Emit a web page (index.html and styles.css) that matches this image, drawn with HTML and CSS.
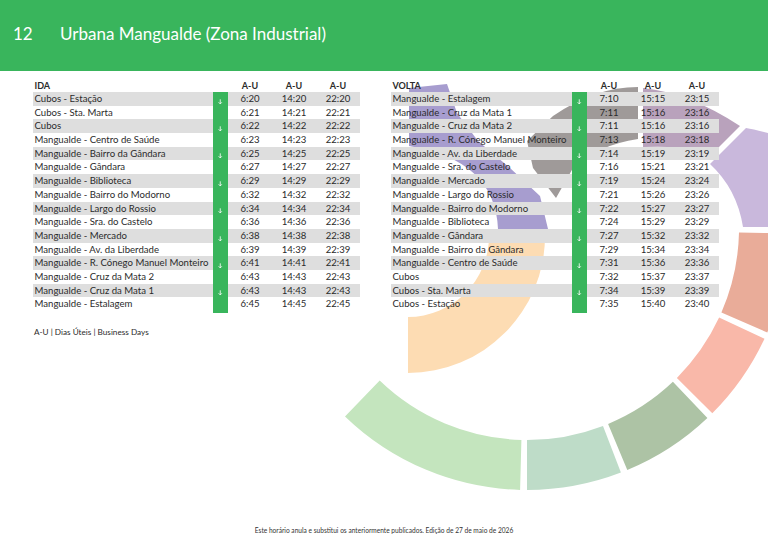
FILE: index.html
```html
<!DOCTYPE html>
<html lang="pt">
<head>
<meta charset="utf-8">
<title>12 Urbana Mangualde (Zona Industrial)</title>
<link rel="stylesheet" href="styles.css">
</head>
<body>
<svg class="ring" width="768" height="543" viewBox="0 0 768 543" aria-hidden="true">
  <path class="s-blue" d="M409,88 L447,84 L457,113 L478,141 L510,168 L540,196 L548,229 L498,229 Q495,160 409,146 Z"/>
  <path class="s-peach" d="M545,236 A137,137 0 0 1 408,373 L408,317 A81,81 0 0 0 489,236 Z"/>
  <path class="s-gray" d="M638,87 Q595,87 553,116 L527,141 L533,168 L556,198 L573,168 Q598,145 638,139 Z"/>
  <path class="s-mauve" d="M643,88 Q690,93 740,126 L716,150 Q680,146 643,147 Z"/>
  <path class="s-lilac" d="M710,164 L746,128 Q760,130 790,140 L790,227 L743,227 Q737,189 710,164 Z"/>
  <path class="s-coral" d="M788.9,233.5 A262,262 0 0 1 767.3,332.5 L721.4,312.5 A212,212 0 0 0 739.0,232.4 Z"/>
  <path class="s-salmon" d="M764.5,338.7 A262,262 0 0 1 712.3,413.3 L676.9,377.9 A212,212 0 0 0 719.1,317.6 Z"/>
  <path class="s-sage" d="M707.4,418.1 A262,262 0 0 1 627.3,470.1 L608.1,423.9 A212,212 0 0 0 672.9,381.8 Z"/>
  <path class="s-mint" d="M620.9,472.6 A262,262 0 0 1 527,490 L527,440 A212,212 0 0 0 603.0,425.9 Z"/>
  <path class="s-green" d="M520.1,489.9 A262,262 0 0 1 345.0,416.5 L379.7,380.5 A212,212 0 0 0 521.4,439.9 Z"/>
</svg>

<header class="top">
  <span class="num">12</span>
  <span class="title">Urbana Mangualde (Zona Industrial)</span>
</header>

<main class="content">
  <div class="tables">
    <section class="tt ida">
      <div class="row head"><span class="name">IDA</span><span class="bar"></span><span class="t">A-U</span><span class="t">A-U</span><span class="t">A-U</span></div>
      <div class="row alt"><span class="name">Cubos - Estação</span><span class="bar"><svg class="arr" viewBox="0 0 5 6"><path d="M2.5 0.3V5.4M0.7 3.6L2.5 5.4L4.3 3.6"/></svg></span><span class="t">6:20</span><span class="t">14:20</span><span class="t">22:20</span></div>
      <div class="row"><span class="name">Cubos - Sta. Marta</span><span class="bar"></span><span class="t">6:21</span><span class="t">14:21</span><span class="t">22:21</span></div>
      <div class="row alt"><span class="name">Cubos</span><span class="bar"><svg class="arr" viewBox="0 0 5 6"><path d="M2.5 0.3V5.4M0.7 3.6L2.5 5.4L4.3 3.6"/></svg></span><span class="t">6:22</span><span class="t">14:22</span><span class="t">22:22</span></div>
      <div class="row"><span class="name">Mangualde - Centro de Saúde</span><span class="bar"></span><span class="t">6:23</span><span class="t">14:23</span><span class="t">22:23</span></div>
      <div class="row alt"><span class="name">Mangualde - Bairro da Gândara</span><span class="bar"><svg class="arr" viewBox="0 0 5 6"><path d="M2.5 0.3V5.4M0.7 3.6L2.5 5.4L4.3 3.6"/></svg></span><span class="t">6:25</span><span class="t">14:25</span><span class="t">22:25</span></div>
      <div class="row"><span class="name">Mangualde - Gândara</span><span class="bar"></span><span class="t">6:27</span><span class="t">14:27</span><span class="t">22:27</span></div>
      <div class="row alt"><span class="name">Mangualde - Biblioteca</span><span class="bar"><svg class="arr" viewBox="0 0 5 6"><path d="M2.5 0.3V5.4M0.7 3.6L2.5 5.4L4.3 3.6"/></svg></span><span class="t">6:29</span><span class="t">14:29</span><span class="t">22:29</span></div>
      <div class="row"><span class="name">Mangualde - Bairro do Modorno</span><span class="bar"></span><span class="t">6:32</span><span class="t">14:32</span><span class="t">22:32</span></div>
      <div class="row alt"><span class="name">Mangualde - Largo do Rossio</span><span class="bar"><svg class="arr" viewBox="0 0 5 6"><path d="M2.5 0.3V5.4M0.7 3.6L2.5 5.4L4.3 3.6"/></svg></span><span class="t">6:34</span><span class="t">14:34</span><span class="t">22:34</span></div>
      <div class="row"><span class="name">Mangualde - Sra. do Castelo</span><span class="bar"></span><span class="t">6:36</span><span class="t">14:36</span><span class="t">22:36</span></div>
      <div class="row alt"><span class="name">Mangualde - Mercado</span><span class="bar"><svg class="arr" viewBox="0 0 5 6"><path d="M2.5 0.3V5.4M0.7 3.6L2.5 5.4L4.3 3.6"/></svg></span><span class="t">6:38</span><span class="t">14:38</span><span class="t">22:38</span></div>
      <div class="row"><span class="name">Mangualde - Av. da Liberdade</span><span class="bar"></span><span class="t">6:39</span><span class="t">14:39</span><span class="t">22:39</span></div>
      <div class="row alt"><span class="name">Mangualde - R. Cónego Manuel Monteiro</span><span class="bar"><svg class="arr" viewBox="0 0 5 6"><path d="M2.5 0.3V5.4M0.7 3.6L2.5 5.4L4.3 3.6"/></svg></span><span class="t">6:41</span><span class="t">14:41</span><span class="t">22:41</span></div>
      <div class="row"><span class="name">Mangualde - Cruz da Mata 2</span><span class="bar"></span><span class="t">6:43</span><span class="t">14:43</span><span class="t">22:43</span></div>
      <div class="row alt"><span class="name">Mangualde - Cruz da Mata 1</span><span class="bar"><svg class="arr" viewBox="0 0 5 6"><path d="M2.5 0.3V5.4M0.7 3.6L2.5 5.4L4.3 3.6"/></svg></span><span class="t">6:43</span><span class="t">14:43</span><span class="t">22:43</span></div>
      <div class="row"><span class="name">Mangualde - Estalagem</span><span class="bar"></span><span class="t">6:45</span><span class="t">14:45</span><span class="t">22:45</span></div>
      <div class="row tail"><span class="name"></span><span class="bar"></span></div>
    </section>

    <section class="tt volta">
      <div class="row head"><span class="name">VOLTA</span><span class="bar"></span><span class="t">A-U</span><span class="t">A-U</span><span class="t">A-U</span></div>
      <div class="row alt"><span class="name">Mangualde - Estalagem</span><span class="bar"><svg class="arr" viewBox="0 0 5 6"><path d="M2.5 0.3V5.4M0.7 3.6L2.5 5.4L4.3 3.6"/></svg></span><span class="t">7:10</span><span class="t">15:15</span><span class="t">23:15</span></div>
      <div class="row"><span class="name">Mangualde - Cruz da Mata 1</span><span class="bar"></span><span class="t">7:11</span><span class="t">15:16</span><span class="t">23:16</span></div>
      <div class="row alt"><span class="name">Mangualde - Cruz da Mata 2</span><span class="bar"><svg class="arr" viewBox="0 0 5 6"><path d="M2.5 0.3V5.4M0.7 3.6L2.5 5.4L4.3 3.6"/></svg></span><span class="t">7:11</span><span class="t">15:16</span><span class="t">23:16</span></div>
      <div class="row"><span class="name">Mangualde - R. Cónego Manuel Monteiro</span><span class="bar"></span><span class="t">7:13</span><span class="t">15:18</span><span class="t">23:18</span></div>
      <div class="row alt"><span class="name">Mangualde - Av. da Liberdade</span><span class="bar"><svg class="arr" viewBox="0 0 5 6"><path d="M2.5 0.3V5.4M0.7 3.6L2.5 5.4L4.3 3.6"/></svg></span><span class="t">7:14</span><span class="t">15:19</span><span class="t">23:19</span></div>
      <div class="row"><span class="name">Mangualde - Sra. do Castelo</span><span class="bar"></span><span class="t">7:16</span><span class="t">15:21</span><span class="t">23:21</span></div>
      <div class="row alt"><span class="name">Mangualde - Mercado</span><span class="bar"><svg class="arr" viewBox="0 0 5 6"><path d="M2.5 0.3V5.4M0.7 3.6L2.5 5.4L4.3 3.6"/></svg></span><span class="t">7:19</span><span class="t">15:24</span><span class="t">23:24</span></div>
      <div class="row"><span class="name">Mangualde - Largo do Rossio</span><span class="bar"></span><span class="t">7:21</span><span class="t">15:26</span><span class="t">23:26</span></div>
      <div class="row alt"><span class="name">Mangualde - Bairro do Modorno</span><span class="bar"><svg class="arr" viewBox="0 0 5 6"><path d="M2.5 0.3V5.4M0.7 3.6L2.5 5.4L4.3 3.6"/></svg></span><span class="t">7:22</span><span class="t">15:27</span><span class="t">23:27</span></div>
      <div class="row"><span class="name">Mangualde - Biblioteca</span><span class="bar"></span><span class="t">7:24</span><span class="t">15:29</span><span class="t">23:29</span></div>
      <div class="row alt"><span class="name">Mangualde - Gândara</span><span class="bar"><svg class="arr" viewBox="0 0 5 6"><path d="M2.5 0.3V5.4M0.7 3.6L2.5 5.4L4.3 3.6"/></svg></span><span class="t">7:27</span><span class="t">15:32</span><span class="t">23:32</span></div>
      <div class="row"><span class="name">Mangualde - Bairro da Gândara</span><span class="bar"></span><span class="t">7:29</span><span class="t">15:34</span><span class="t">23:34</span></div>
      <div class="row alt"><span class="name">Mangualde - Centro de Saúde</span><span class="bar"><svg class="arr" viewBox="0 0 5 6"><path d="M2.5 0.3V5.4M0.7 3.6L2.5 5.4L4.3 3.6"/></svg></span><span class="t">7:31</span><span class="t">15:36</span><span class="t">23:36</span></div>
      <div class="row"><span class="name">Cubos</span><span class="bar"></span><span class="t">7:32</span><span class="t">15:37</span><span class="t">23:37</span></div>
      <div class="row alt"><span class="name">Cubos - Sta. Marta</span><span class="bar"><svg class="arr" viewBox="0 0 5 6"><path d="M2.5 0.3V5.4M0.7 3.6L2.5 5.4L4.3 3.6"/></svg></span><span class="t">7:34</span><span class="t">15:39</span><span class="t">23:39</span></div>
      <div class="row"><span class="name">Cubos - Estação</span><span class="bar"></span><span class="t">7:35</span><span class="t">15:40</span><span class="t">23:40</span></div>
      <div class="row tail"><span class="name"></span><span class="bar"></span></div>
    </section>
  </div>
  <p class="note">A-U | Dias Úteis | Business Days</p>
</main>

<footer class="foot">Este horário anula e substitui os anteriormente publicados. Edição de 27 de maio de 2026</footer>
</body>
</html>
```

FILE: styles.css
```css
* { box-sizing: border-box; }

html, body { margin: 0; padding: 0; }

body {
  width: 768px;
  height: 543px;
  position: relative;
  overflow: hidden;
  display: flex;
  flex-direction: column;
  background: #ffffff;
  color: #2b2b2b;
  font-family: Lato, "Open Sans", "DejaVu Sans", sans-serif;
}

.ring { position: absolute; left: 0; top: 0; z-index: 0; }
.s-blue { fill: #a79dcf; }
.s-peach { fill: #fddcb3; }
.s-gray { fill: #9f9a99; }
.s-mauve { fill: #b9a2bc; }
.s-lilac { fill: #c9b8dc; }
.s-coral { fill: #e9ac99; }
.s-salmon { fill: #f9b8a9; }
.s-sage { fill: #adc3a5; }
.s-mint { fill: #bedcc8; }
.s-green { fill: #c4e5be; }

.top {
  position: relative;
  z-index: 1;
  height: 71px;
  flex: none;
  background: #39b55c;
  color: #ffffff;
  display: flex;
  align-items: center;
  padding: 0 0 5px 13px;
  font-size: 17px;
}
.top .num { width: 47px; }

.content {
  position: relative;
  z-index: 1;
  padding: 9px 0 0 33px;
}

.tables { display: flex; gap: 31px; }

.row {
  display: grid;
  height: 13.7px;
  line-height: 13.7px;
  font-size: 9.6px;
  white-space: nowrap;
}
.ida .row { grid-template-columns: 180px 15px 44px 44px 44px; }
.volta .row { grid-template-columns: 181px 15px 44px 44px 44px; }

.row.head { height: 12px; line-height: 12px; font-weight: 700; font-size: 9px; }
.row.alt { background: #dedede; }
.row.tail { height: 1.5px; }

.name { padding-left: 1.5px; overflow: visible; }
.t { text-align: center; }

.bar {
  background: #39b55c;
  display: flex;
  justify-content: center;
  align-items: flex-end;
  padding-bottom: 1.5px;
}
.head .bar { background: none; }

.arr {
  width: 4.5px;
  height: 5.5px;
  fill: none;
  stroke: #ffffff;
  stroke-width: 0.9;
}

.note {
  margin: 14px 0 0 1px;
  font-size: 8.2px;
  line-height: 11px;
}

.foot {
  position: relative;
  z-index: 1;
  margin-top: auto;
  padding-bottom: 8px;
  text-align: center;
  font-size: 6.6px;
  line-height: 9px;
  color: #333333;
}
```
